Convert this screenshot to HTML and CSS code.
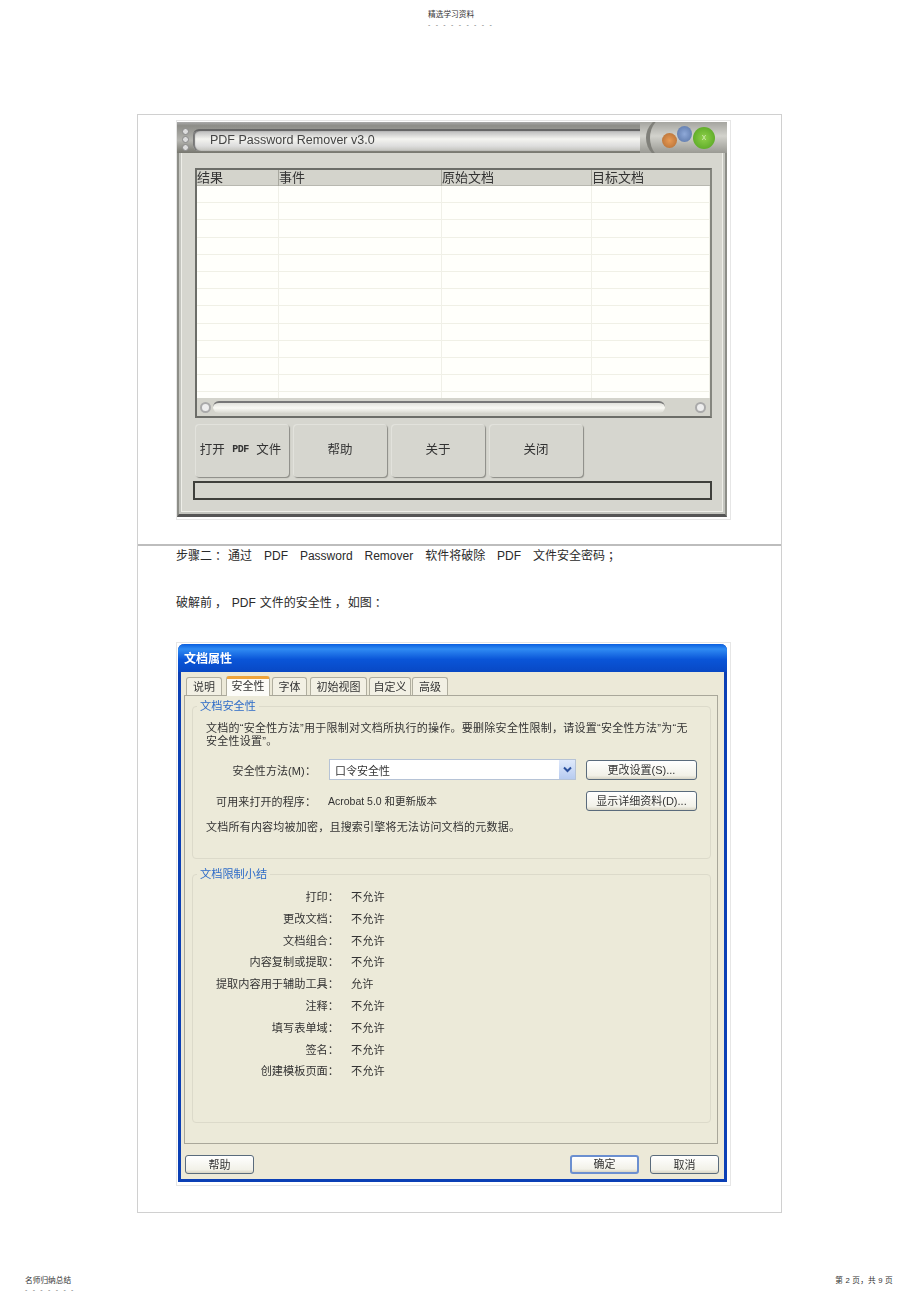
FILE: index.html
```html
<!DOCTYPE html>
<html lang="zh">
<head>
<meta charset="utf-8">
<title>PDF Password Remover</title>
<link rel="stylesheet" href="styles.css">
</head>
<body>
<div class="page">
  <header class="page-head">
    <div class="head-title">精选学习资料</div>
    <div class="dots">- - - - - - - - -</div>
  </header>
  <main class="doc-box">
    <section class="sec-one">
      <div class="shot shot-app">
        <div class="app">
          <div class="app-title">
            <div class="grip"><i></i><i></i><i></i></div>
            <div class="title-pill">PDF Password Remover v3.0</div>
            <div class="controls"><i class="arc"></i><i class="c-orange"></i><i class="c-blue"></i><i class="c-green">x</i></div>
          </div>
          <div class="app-body">
            <div class="table">
              <div class="thead">
                <div class="th col-a">结果</div>
                <div class="th col-b">事件</div>
                <div class="th col-c">原始文档</div>
                <div class="th col-d">目标文档</div>
              </div>
              <div class="tbody">
                <div class="vline col-a"></div>
                <div class="vline col-b"></div>
                <div class="vline col-c"></div>
                <div class="vline col-d"></div>
              </div>
              <div class="hscroll">
                <span class="sb-end"></span>
                <span class="sb-thumb"></span>
                <span class="sb-end"></span>
              </div>
            </div>
            <div class="app-btns">
              <div class="app-btn btn-open">打开 <span class="btn-latin">PDF</span> 文件</div>
              <div class="app-btn">帮助</div>
              <div class="app-btn">关于</div>
              <div class="app-btn">关闭</div>
            </div>
            <div class="status"></div>
          </div>
        </div>
      </div>
    </section>
    <section class="sec-two">
      <p class="step">步骤二<span class="pt pad">：</span>通过 PDF Password Remover 软件将破除 PDF 文件安全密码<span class="pt pad">；</span></p>
      <p class="before">破解前<span class="pt pad">，</span> PDF 文件的安全性<span class="pt pad">，</span>如图<span class="pt pad">：</span></p>
      <div class="shot shot-dlg">
        <div class="dlg">
          <div class="dlg-title">文档属性</div>
          <div class="dlg-body">
            <div class="tabs">
              <div class="tab tab-a">说明</div>
              <div class="tab tab-b tab-on">安全性</div>
              <div class="tab tab-c">字体</div>
              <div class="tab tab-d">初始视图</div>
              <div class="tab tab-e">自定义</div>
              <div class="tab tab-f">高级</div>
            </div>
            <div class="panel">
              <fieldset class="group group-sec">
                <legend>文档安全性</legend>
                <p class="desc">文档的“安全性方法”用于限制对文档所执行的操作。要删除安全性限制，请设置“安全性方法”为“无安全性设置”。</p>
                <div class="form-row row-method">
                  <span class="f-label">安全性方法(M)<span class="pt">：</span></span>
                  <div class="select">
                    <span>口令安全性</span>
                    <span class="sel-btn"><svg width="9" height="7" viewBox="0 0 9 7"><path d="M1 1.5 4.5 5 8 1.5" fill="none" stroke="#2a4f9c" stroke-width="2"/></svg></span>
                  </div>
                  <div class="xp-btn">更改设置(S)...</div>
                </div>
                <div class="form-row row-open">
                  <span class="f-label">可用来打开的程序<span class="pt">：</span></span>
                  <span class="acro">Acrobat 5.0 和更新版本</span>
                  <div class="xp-btn">显示详细资料(D)...</div>
                </div>
                <p class="enc">文档所有内容均被加密，且搜索引擎将无法访问文档的元数据。</p>
              </fieldset>
              <fieldset class="group group-sum">
                <legend>文档限制小结</legend>
                <dl class="perm">
                  <dt>打印<span class="pt">：</span></dt><dd>不允许</dd>
                  <dt>更改文档<span class="pt">：</span></dt><dd>不允许</dd>
                  <dt>文档组合<span class="pt">：</span></dt><dd>不允许</dd>
                  <dt>内容复制或提取<span class="pt">：</span></dt><dd>不允许</dd>
                  <dt>提取内容用于辅助工具<span class="pt">：</span></dt><dd>允许</dd>
                  <dt>注释<span class="pt">：</span></dt><dd>不允许</dd>
                  <dt>填写表单域<span class="pt">：</span></dt><dd>不允许</dd>
                  <dt>签名<span class="pt">：</span></dt><dd>不允许</dd>
                  <dt>创建模板页面<span class="pt">：</span></dt><dd>不允许</dd>
                </dl>
              </fieldset>
            </div>
            <div class="dlg-foot">
              <div class="xp-btn small">帮助</div>
              <div class="foot-right">
                <div class="xp-btn small default">确定</div>
                <div class="xp-btn small">取消</div>
              </div>
            </div>
          </div>
        </div>
      </div>
    </section>
  </main>
  <footer class="page-foot">
    <div class="foot-left">
      <div class="foot-text">名师归纳总结</div>
      <div class="dots">- - - - - - -</div>
    </div>
    <div class="foot-text foot-page">第 2 页<span class="pt">，</span>共 9 页</div>
  </footer>
</div>
</body>
</html>
```
FILE: styles.css
```css
* { box-sizing: border-box; }
html, body { margin: 0; padding: 0; background: #fff; }
body { font-family: "Liberation Sans", "Noto Sans CJK SC", sans-serif; color: #222; text-spacing-trim: space-all; }
.pt { font-family: "Noto Sans CJK TC", sans-serif; line-height: 0; }
.pad { padding: 0 1px 0 3px; }
.page { width: 920px; height: 1303px; overflow: hidden; }
.page-head { height: 114px; padding: 9px 0 0 428px; }
.head-title { font-size: 7.7px; line-height: 11px; color: #333; }
.dots { font-size: 7px; line-height: 8px; margin-top: 1px; letter-spacing: 1.7px; color: #777; white-space: pre; }

.doc-box { margin-left: 137px; width: 645px; height: 1099px; border: 1px solid #d0d0d0; }
.sec-one { height: 431px; padding: 5px 0 0 38px; border-bottom: 2px solid #bdbdbd; }
.sec-two { padding: 0 0 0 38px; }
.step, .before { margin: 0; font-size: 12px; line-height: 16px; color: #2a2a2a; white-space: pre; }
.step { padding-top: 2px; word-spacing: 8.6px; }
.before { margin-top: 31px; word-spacing: .5px; }
.shot { width: 555px; border: 1px solid #e6e6e6; overflow: hidden; }
.shot-app { height: 400px; padding: 1px 3px 2px 0; }
.shot-dlg { height: 544px; margin-top: 31px; padding: 1px; }

/* app window */
.app { filter: blur(.45px); height: 395px; background: #d6d6cf; border: 2px solid #8d8e88; border-top: 0; border-bottom: 3px solid #555; box-shadow: inset 0 0 0 2px #c4c5bf, inset 0 0 0 3px #eeeee8; display: flex; flex-direction: column; }
.app-title { height: 31px; margin: 0 -2px; flex: none; display: flex; align-items: center; background: linear-gradient(#aaa, #8d8d88 12%, #b5b5b0 60%, #77776f); padding: 4px 0 0 5px; position: relative; }
.grip { width: 11px; display: flex; flex-direction: column; gap: 1px; }
.grip i { display: block; width: 7px; height: 7px; border-radius: 50%; background: #ddd; border: 1px solid #888; }
.title-pill { width: 447px; height: 22px; padding-left: 17px; font-size: 12.5px; line-height: 18px; color: #444; border-radius: 6px 0 0 6px; border-top: 2px solid #666; background: linear-gradient(#bbb, #f4f4f0 40%, #ddd 75%, #c2c2bc); box-shadow: inset 2px 0 1px #777; }
.controls { flex: 1; align-self: stretch; position: relative; overflow: hidden; margin-top: -4px; background: linear-gradient(#a5a5a0, #d2d2cc 45%, #9a9a94); }
.controls i { position: absolute; border-radius: 50%; display: block; }
.controls .arc { left: 6px; top: -6px; width: 44px; height: 44px; border-left: 4px solid #80807a; background: transparent; }
.c-orange { left: 22px; top: 11px; width: 15px; height: 15px; background: radial-gradient(#e89a54, #b06c34); }
.c-blue { left: 37px; top: 4px; width: 15px; height: 16px; background: radial-gradient(#8fa9d8, #5672a4); }
.c-green { left: 53px; top: 5px; width: 22px; height: 22px; background: radial-gradient(#8fd04a, #4fa01e); color: #cfe9b0; font: 9px/21px "Liberation Sans", sans-serif; text-align: center; }

.app-body { padding: 15px 13px 0 16px; flex: 1; display: flex; flex-direction: column; }
.table { width: 517px; height: 250px; border: 2px solid #6c6d68; border-right-color: #85867f; background: #fff; display: flex; flex-direction: column; }
.thead { height: 16px; flex: none; display: flex; background: #d4d4cc; font-size: 13px; line-height: 15px; color: #333; box-shadow: inset 0 -1px 0 #b8b8b0; }
.th { padding-left: 0; border-right: 1px solid #a8a89f; }
.col-a { width: 82px; }
.col-b { width: 163px; }
.col-c { width: 150px; }
.col-d { width: 118px; border-right: 0; }
.tbody { flex: 1; display: flex; background: repeating-linear-gradient(#fffffb 0, #fffffb 16.2px, #f0f0e6 16.2px, #f0f0e6 17.2px); }
.vline { border-right: 1px solid #f0f0e8; }
.hscroll { height: 18px; flex: none; background: #d4d4cc; display: flex; align-items: center; padding: 0 3px; }
.sb-end { width: 11px; height: 11px; border-radius: 50%; background: #eee; border: 2px solid #aaa; flex: none; }
.sb-thumb { width: 452px; height: 12px; margin: 0 auto 0 2px; border-radius: 6px; border-top: 2px solid #777; background: linear-gradient(#e2e2dc, #fafaf5 50%, #d8d8d0); }
.sb-thumb + .sb-end { margin-right: 1px; }
.app-btns { display: flex; gap: 4px; margin-top: 6px; }
.app-btn { width: 94px; height: 53px; padding-bottom: 4px; display: flex; align-items: center; justify-content: center; gap: 4px; font-size: 12.5px; color: #333; background: #d6d6cf; border-radius: 4px; box-shadow: inset 1px 1px 0 #e2e2dc, 1px 1px 1px #8a8a84; white-space: pre; }
.btn-open { padding-right: 3px; }
.btn-latin { padding-top: 2px; font-size: 10px; font-family: "Liberation Mono", monospace; font-weight: 700; letter-spacing: -.5px; }
.status { width: 519px; height: 19px; margin: 4px 0 0 -2px; border: 2px solid #3f403c; background: #d6d6cf; }

/* dialog */
.dlg { filter: blur(.45px); height: 538px; width: 549px; border: 3px solid #0b3fb5; border-top: 0; border-radius: 6px 6px 0 0; background: #ece9d8; display: flex; flex-direction: column; }
.dlg-title { margin: 0 -3px; height: 28px; flex: none; padding: 7px 0 0 6px; border-radius: 6px 6px 0 0; font-size: 12px; line-height: 16px; font-weight: 700; color: #fff; background: linear-gradient(#0a5fe0, #2f8bf3 18%, #0a55d8 55%, #0848c4); }
.dlg-body { flex: 1; padding: 4px 0 0 3px; display: flex; flex-direction: column; }
.tabs { display: flex; height: 19px; padding-left: 2px; font-size: 11px; color: #333; align-items: flex-end; }
.tab { height: 18px; line-height: 18px; text-align: center; background: #f2f0e4; border: 1px solid #b0ae9f; border-bottom: 0; border-radius: 3px 3px 0 0; }
.tab-a { width: 36px; margin-right: 4px; }
.tab-b { width: 44px; margin-right: 2px; }
.tab-c { width: 35px; margin-right: 3px; }
.tab-d { width: 57px; margin-right: 2px; }
.tab-e { width: 42px; margin-right: 1px; }
.tab-f { width: 36px; }
.tab-on { height: 20px; border-top: 3px solid #eda43c; background: #fcfcf8; position: relative; z-index: 1; margin-bottom: -1px; line-height: 15px; }
.panel { width: 534px; height: 449px; border: 1px solid #a9a79a; padding: 3px 7px 0 7px; background: #ecead9; }
.group { margin: 0; padding: 0; border: 1px solid #dcdaca; border-radius: 4px; width: 519px; position: relative; }
.group legend { margin-left: 4px; padding: 0 3px; font-size: 11.2px; line-height: 14px; color: #2d6bc8; }
.group-sec { height: 160px; padding: 0 0 0 13px; }
.group-sec legend { margin-left: -9px; }
.group-sum { height: 256px; margin-top: 8px; }
.desc { margin: 9px 0 0; width: 492px; font-size: 11px; letter-spacing: .27px; line-height: 13px; color: #333; }
.form-row { display: flex; align-items: center; height: 21px; font-size: 11px; color: #333; }
.row-method { margin-top: 11px; }
.row-open { margin-top: 10px; }
.f-label { width: 110px; text-align: right; flex: none; letter-spacing: .1px; }
.select { width: 247px; height: 21px; margin-left: 13px; flex: none; background: #fff; border: 1px solid #b6c3d6; display: flex; align-items: center; justify-content: space-between; padding: 0 0 0 5px; }
.sel-btn { width: 16px; height: 19px; background: linear-gradient(#dfe9fb, #b7cbf0); display: flex; align-items: center; justify-content: center; }
.acro { width: 247px; margin-left: 12px; flex: none; font-size: 10.5px; margin-right: 1px; }
.xp-btn { width: 111px; height: 20px; margin-left: 10px; flex: none; font-size: 11px; line-height: 18px; text-align: center; color: #333; border: 1px solid #5a6b7c; border-radius: 3px; background: linear-gradient(#fff, #f2f1e8 80%, #d8d5c6); white-space: nowrap; }
.enc { margin: 9px 0 0; font-size: 11px; letter-spacing: .22px; line-height: 14px; color: #333; }
.perm { margin: 6px 0 0; display: grid; grid-template-columns: 146px 1fr; column-gap: 12px; grid-auto-rows: 21.8px; font-size: 11.2px; line-height: 21.8px; color: #333; }
.perm dt { text-align: right; white-space: nowrap; }
.perm dd { margin: 0; }
.dlg-foot { display: flex; justify-content: space-between; margin-top: 11px; padding-left: 1px; }
.foot-right { display: flex; gap: 11px; margin-right: 5px; }
.xp-btn.small { width: 69px; height: 19px; margin: 0; line-height: 18px; }
.xp-btn.default { border: 2px solid #6b8fd0; line-height: 15px; }

/* footer */
.page-foot { display: flex; justify-content: space-between; padding: 62px 27px 0 25px; }
.foot-left .dots { margin-top: 0; }
.foot-text { font-size: 7.7px; line-height: 11px; color: #333; }
.foot-page { letter-spacing: .2px; }
```
